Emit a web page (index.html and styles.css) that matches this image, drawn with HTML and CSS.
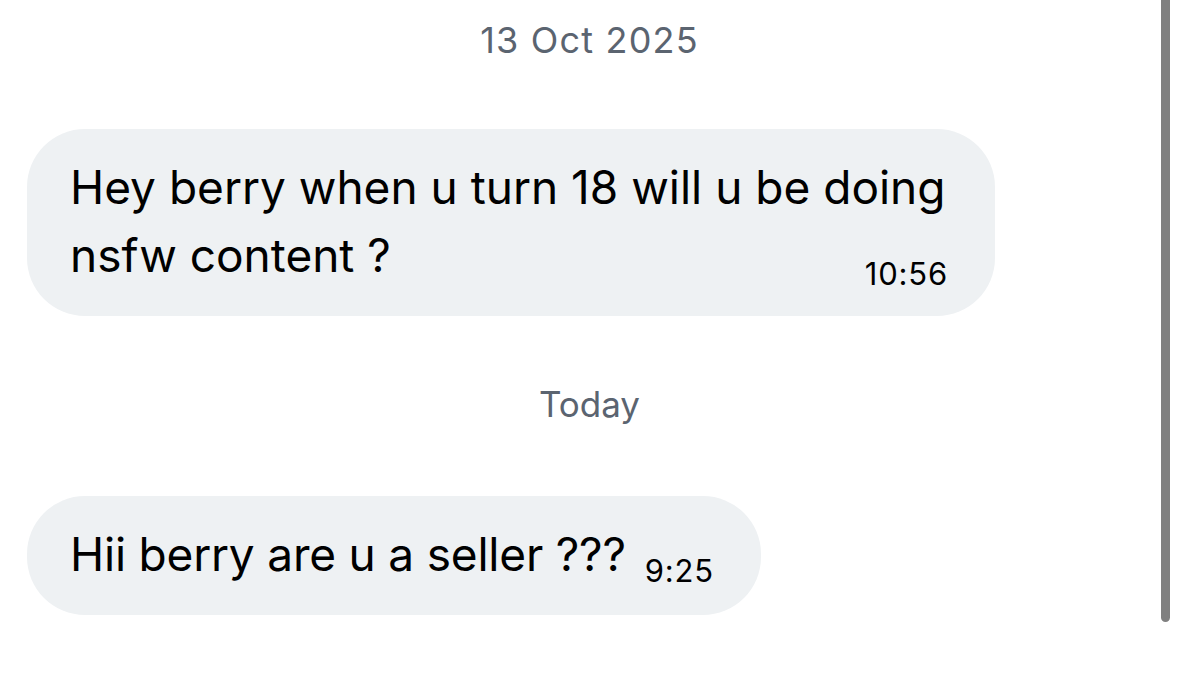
FILE: index.html
```html
<!DOCTYPE html>
<html lang="en">
<head>
<meta charset="utf-8">
<title>Chat</title>
<link rel="stylesheet" href="styles.css">
</head>
<body>
<main class="chat">
  <div class="day day--first">13 Oct 2025</div>
  <div class="bubble bubble--first">Hey berry when u turn 18 will u be doing nsfw content ?<span class="time">10:56</span></div>
  <div class="day day--today">Today</div>
  <div class="bubble bubble--second">Hii berry are u a seller ???<span class="time">9:25</span></div>
</main>
<div class="scrollbar"></div>
</body>
</html>
```
FILE: styles.css
```css
html, body {
  margin: 0;
  padding: 0;
  background: #ffffff;
}

body {
  width: 1179px;
  height: 679px;
  overflow: hidden;
  position: relative;
  font-family: Inter, "Liberation Sans", Arial, sans-serif;
  color: #000000;
}

.chat {
  display: flex;
  flex-direction: column;
  align-items: flex-start;
  padding: 20px 0 0 27px;
  width: 1179px;
  box-sizing: border-box;
}

.day {
  align-self: stretch;
  margin-left: -27px;
  text-align: center;
  font-size: 35px;
  line-height: 40px;
  color: #5b6470;
}

.day--first {
  font-size: 36px;
  letter-spacing: 1.2px;
}

.day--today {
  margin-top: 68px;
}

.bubble {
  box-sizing: border-box;
  max-width: 968px;
  padding: 24px 47px 27px 43px;
  background: #eef1f3;
  border-radius: 58px;
  font-size: 46px;
  line-height: 68px;
}

.bubble--first {
  margin-top: 69px;
}

.bubble--second {
  margin-top: 72px;
  letter-spacing: -0.2px;
}

.time {
  float: right;
  font-size: 31px;
  line-height: 30px;
  letter-spacing: 0.8px;
  margin-top: 38px;
  margin-left: 22px;
}

.bubble--second .time {
  margin-top: 36px;
  margin-left: 19px;
}

.scrollbar {
  position: absolute;
  left: 1161px;
  top: -6px;
  width: 9px;
  height: 628px;
  background: #808080;
  border-radius: 5px;
}
```
